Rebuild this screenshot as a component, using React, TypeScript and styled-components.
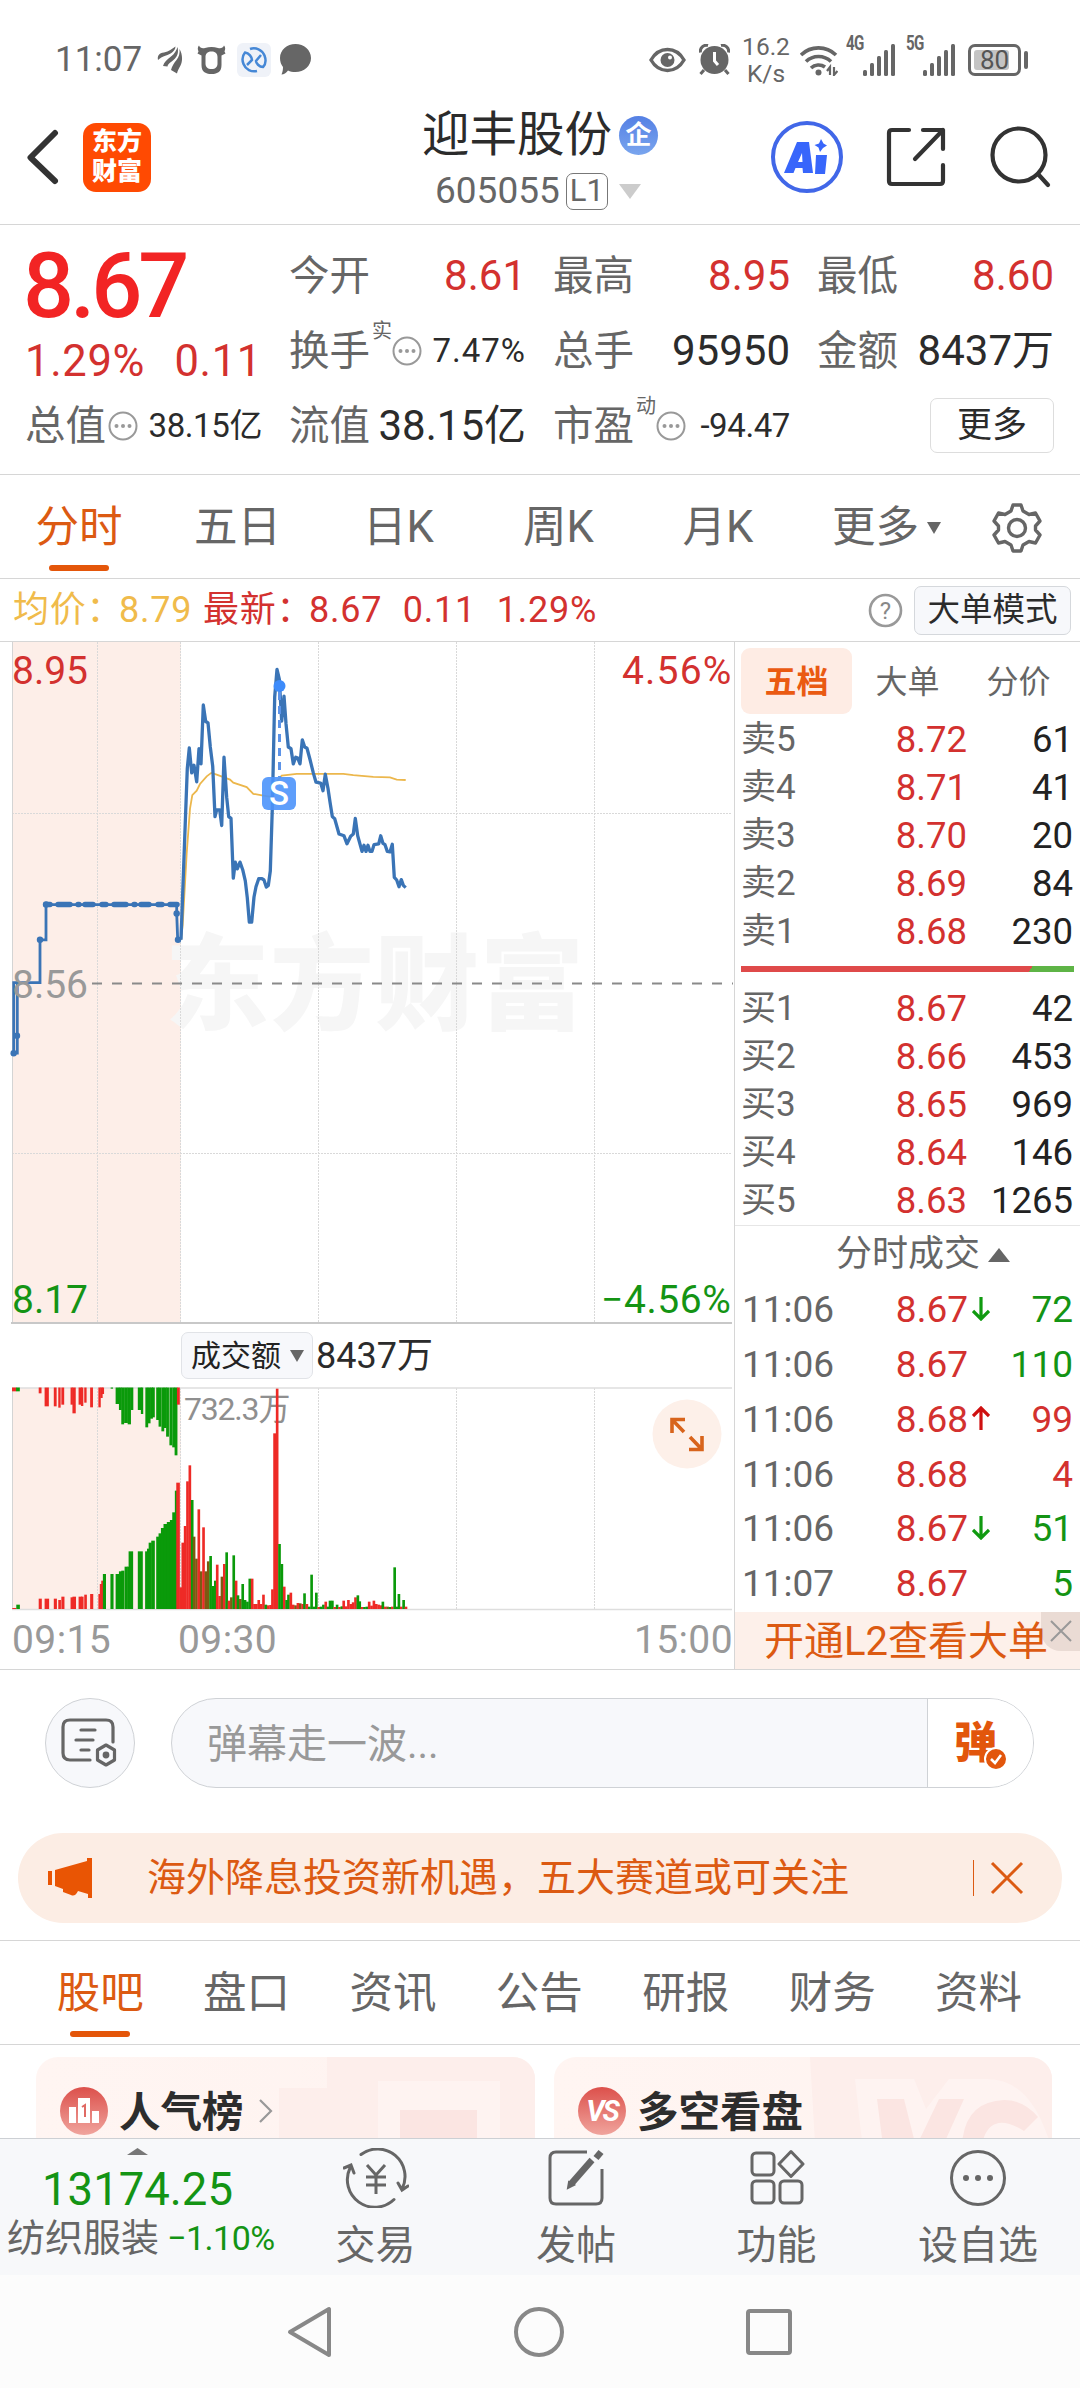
import React from 'react';
import styled, { createGlobalStyle } from 'styled-components';

const RED = '#d3312f';
const GREEN = '#149414';
const ORANGE = '#dc5a12';
const GREY = '#666';
const INK = '#2b2b2b';
const LINE = '#d6d6d6';

const Global = createGlobalStyle`
  * { box-sizing: border-box; }
  body { margin: 0; background: #fff; }
`;

const Screen = styled.div`
  width: 1080px;
  height: 2388px;
  overflow: hidden;
  display: flex;
  flex-direction: column;
  background: #fff;
  color: ${INK};
  font-family: Roboto, 'Noto Sans CJK SC', sans-serif;
  line-height: 1.2;
  white-space: nowrap;
`;

/* ---------- status bar ---------- */
const StatusBar = styled.div`
  height: 96px;
  padding: 23px 52px 0 55px;
  display: flex;
  justify-content: space-between;
  align-items: center;
  color: ${GREY};
`;
const StatusGroup = styled.div`
  display: flex;
  align-items: center;
`;
const Clock = styled.span`
  width: 102px;
  font-size: 35px;
  line-height: 40px;
`;
const Speed = styled.div`
  width: 56px;
  margin-left: 8px;
  text-align: center;
  font-size: 24.5px;
  line-height: 27px;
`;
const Gap = styled.span<{ $w: number }>`
  width: ${(p) => p.$w}px;
  flex: none;
`;
const NetTag = styled.span`
  font: 700 21px/20px 'Roboto', sans-serif;
  letter-spacing: -1px;
  width: 24px;
  align-self: flex-start;
  transform: scaleX(0.72);
  transform-origin: 0 0;
  margin-right: -7px;
`;
const Battery = styled.div`
  width: 53px;
  height: 32px;
  border: 3px solid ${GREY};
  border-radius: 7px;
  padding: 3px;
  display: flex;
`;
const BatteryFill = styled.div`
  width: 35px;
  background: #c4c4c4;
  border-radius: 3px;
  color: #555;
  font-size: 26px;
  line-height: 21px;
  padding-left: 6px;
`;
const BatteryTip = styled.div`
  width: 4px;
  height: 18px;
  margin-left: 3px;
  background: ${GREY};
  border-radius: 2px;
`;

/* ---------- header ---------- */
const Header = styled.header`
  height: 129px;
  border-bottom: 1px solid ${LINE};
  display: grid;
  grid-template-columns: 422px 240px 1fr;
`;
const HeaderLeft = styled.div`
  display: flex;
  align-items: center;
  padding: 0 0 6px 25px;
  gap: 22px;
`;
const Logo = styled.div`
  width: 68px;
  height: 69px;
  border-radius: 13px;
  background: #ff4a02;
  color: #fff;
  font-weight: 900;
  font-size: 25px;
  line-height: 30px;
  text-align: center;
  padding-top: 4px;
`;
const TitleBlock = styled.div`
  display: flex;
  flex-direction: column;
  width: 240px;
`;
const TitleRow = styled.div`
  display: flex;
  align-items: center;
  height: 60px;
  margin-top: 9px;
  font-size: 47.5px;
  gap: 7px;
  line-height: 61px;
`;
const Badge = styled.span`
  width: 39px;
  height: 39px;
  border-radius: 50%;
  background: linear-gradient(#5580e4, #79a5ee);
  color: #fff;
  font-weight: 700;
  font-size: 26px;
  line-height: 39px;
  text-align: center;
`;
const CodeRow = styled.div`
  display: flex;
  align-items: center;
  height: 40px;
  margin-top: 6px;
  padding-left: 13px;
  color: ${GREY};
  font-size: 37px;
`;
const LevelTag = styled.span`
  width: 42px;
  height: 37px;
  margin: 0 11px 0 6px;
  border: 1.5px solid #777;
  border-radius: 7px;
  font-size: 31px;
  line-height: 34px;
  text-align: center;
`;
const HeaderRight = styled.div`
  display: flex;
  align-items: center;
  justify-content: flex-end;
  padding: 0 29px 6px 0;
  gap: 43px;
`;
const AiButton = styled.div`
  width: 72px;
  height: 72px;
  border: 4px solid #4167e8;
  border-radius: 50%;
  display: grid;
  place-items: center;
`;

/* ---------- quote summary ---------- */
const Quote = styled.section`
  height: 250px;
  padding: 13px 25px 0 25px;
  border-bottom: 1px solid ${LINE};
  display: grid;
  grid-template-columns: repeat(4, 237px);
  column-gap: 27px;
`;
const QuoteCol = styled.div`
  display: flex;
  flex-direction: column;
`;
const BigPrice = styled.div`
  height: 98px;
  color: #f22424;
  font-weight: 500;
  font-size: 90px;
  line-height: 98px;
  letter-spacing: -4px;
  margin-left: -2px;
`;
const Change = styled.div`
  height: 52px;
  display: flex;
  justify-content: space-between;
  color: ${RED};
  font-size: 43.5px;
  line-height: 52px;
  letter-spacing: 0.7px;
`;
const Stat = styled.div`
  height: 75px;
  display: flex;
  align-items: center;
`;
const StatLabel = styled.span`
  color: ${GREY};
  font-size: 40.5px;
  line-height: 50px;
`;
const StatSup = styled.sup`
  font-size: 20px;
  line-height: 20px;
  color: ${GREY};
  align-self: flex-start;
  margin: 8px 0 0 2px;
`;
const StatValue = styled.span<{ $red?: boolean; $small?: boolean; $wide?: boolean }>`
  margin-left: auto;
  line-height: 50px;
  color: ${(p) => (p.$red ? RED : INK)};
  font-size: ${(p) => (p.$small ? 33 : 42)}px;
  letter-spacing: ${(p) => (p.$wide ? 1 : p.$small ? -0.4 : 0)}px;
`;
const MoreButton = styled.button`
  margin-left: auto;
  width: 124px;
  height: 55px;
  border: 1px solid #ddd;
  border-radius: 7px;
  background: #fff;
  color: ${INK};
  font: 35px/50px Roboto, 'Noto Sans CJK SC', sans-serif;
  padding: 0;
`;

/* ---------- period tabs ---------- */
const PeriodTabs = styled.nav`
  height: 104px;
  border-bottom: 1px solid ${LINE};
  display: grid;
  grid-template-columns: 158px 159px 163px 157px 162px 175px 86px;
`;
const TabCell = styled.div<{ $on?: boolean }>`
  display: flex;
  align-items: center;
  justify-content: center;
  padding-top: 3px;
  gap: 8px;
  font-size: 43.5px;
  color: ${(p) => (p.$on ? ORANGE : GREY)};
`;
const ActiveTab = styled(TabCell)`
  position: relative;
  &::after {
    content: '';
    position: absolute;
    left: calc(50% - 30px);
    bottom: 7px;
    width: 60px;
    height: 6px;
    border-radius: 3px;
    background: #e4560a;
  }
`;

/* ---------- chart header ---------- */
const Legend = styled.div`
  height: 63px;
  border-bottom: 1px solid ${LINE};
  padding: 0 9px 0 13px;
  display: flex;
  align-items: center;
  font-size: 36px;
  line-height: 45px;
  color: ${RED};
`;
const LegendItem = styled.span<{ $w: number; $avg?: boolean }>`
  width: ${(p) => p.$w}px;
  letter-spacing: 0.8px;
  color: ${(p) => (p.$avg ? '#f0bb4b' : RED)};
`;
const ModeButton = styled.button`
  width: 157px;
  height: 49px;
  margin-left: 11px;
  border: 1px solid #d5d8dc;
  border-radius: 7px;
  background: #f7f8fb;
  color: ${INK};
  padding: 0;
  font: 32.5px/47px Roboto, 'Noto Sans CJK SC', sans-serif;
`;

/* ---------- market area ---------- */
const Market = styled.section`
  height: 1028px;
  display: grid;
  grid-template-columns: 734px 346px;
  border-bottom: 1px solid ${LINE};
`;
const ChartSide = styled.div`
  display: flex;
  flex-direction: column;
`;
const AmountRow = styled.div`
  height: 63px;
  padding-left: 181px;
  display: flex;
  align-items: center;
  font-size: 36px;
  line-height: 44px;
`;
const AmountPick = styled.button`
  width: 132px;
  height: 47px;
  margin-right: 3px;
  padding: 0 0 0 9px;
  display: flex;
  align-items: center;
  gap: 9px;
  border: 1px solid #e1e3e7;
  border-radius: 7px;
  background: #f7f8fb;
  color: #222;
  font: 30px/40px Roboto, 'Noto Sans CJK SC', sans-serif;
`;
const TimeAxis = styled.div`
  display: grid;
  grid-template-columns: 166px 1fr auto;
  padding: 7px 1px 0 12px;
  color: #999;
  font-size: 39px;
  line-height: 44px;
  letter-spacing: 0.4px;
`;
const BookSide = styled.aside`
  border-left: 1px solid ${LINE};
  height: 1027px;
  display: flex;
  flex-direction: column;
`;
const BookTabs = styled.div`
  height: 74px;
  padding: 6px 6px 0;
  display: grid;
  grid-template-columns: 111px 111px 111px;
`;
const BookTab = styled.div<{ $on?: boolean }>`
  height: 66px;
  border-radius: 9px;
  background: ${(p) => (p.$on ? '#feece4' : 'transparent')};
  color: ${(p) => (p.$on ? '#ea5a12' : GREY)};
  font-weight: ${(p) => (p.$on ? 700 : 400)};
  font-size: 32px;
  line-height: 69px;
  text-align: center;
`;
const BookRow = styled.div`
  height: 48px;
  padding: 0 7px 0 6px;
  display: grid;
  grid-template-columns: 120px 106px 1fr;
  align-items: center;
  font-size: 36.5px;
  line-height: 48px;
`;
const RowLabel = styled.span`
  color: ${GREY};
  font-size: 35px;
`;
const RowPrice = styled.span`
  color: ${RED};
  text-align: right;
`;
const RowQty = styled.span<{ $c?: string }>`
  color: ${(p) => p.$c || '#222'};
  text-align: right;
`;
const Ratio = styled.div`
  height: 6px;
  margin: 10px 6px 13px;
  background: linear-gradient(120deg, #df4a4a 86.6%, #5eb446 86.6%);
`;
const TickHead = styled.div`
  height: 58px;
  border-top: 1px solid #e6e6e6;
  padding-left: 101px;
  display: flex;
  align-items: center;
  gap: 8px;
  font-size: 36px;
  color: ${GREY};
`;
const TickRow = styled.div`
  height: 54.8px;
  padding: 0 7px 0 7px;
  display: grid;
  grid-template-columns: 120px 106px 22px 1fr;
  align-items: center;
  font-size: 37px;
`;
const TickTime = styled.span`
  color: ${GREY};
`;
const L2Banner = styled.div`
  position: relative;
  flex: 1;
  min-height: 0;
  background: #fdf0ea;
  color: ${ORANGE};
  font-size: 40px;
  line-height: 60px;
  padding-left: 29px;
`;
const L2Close = styled.div`
  position: absolute;
  right: 0;
  top: 0;
  width: 39px;
  height: 39px;
  border-bottom-left-radius: 20px;
  background: rgba(120, 90, 80, 0.14);
  display: grid;
  place-items: center;
`;

/* ---------- comment bar ---------- */
const CommentBar = styled.div`
  height: 163px;
  padding: 28px 46px 0 45px;
  display: flex;
  gap: 36px;
`;
const RoundTool = styled.div`
  width: 90px;
  height: 90px;
  border: 1px solid #cfd2d6;
  border-radius: 50%;
  background: #f7f8fb;
  display: grid;
  place-items: center;
`;
const CommentInput = styled.div`
  flex: 1;
  height: 90px;
  border: 1px solid #cfd2d6;
  border-radius: 45px;
  overflow: hidden;
  display: flex;
  background: #f7f8fb;
  color: #999;
  font-size: 40px;
  line-height: 91px;
  padding-left: 35px;
`;
const DanmuToggle = styled.div`
  width: 106px;
  margin-left: auto;
  border-left: 1px solid #cfd2d6;
  background: #fff;
  display: flex;
  align-items: center;
  color: #e2560c;
  padding-left: 26px;
  font-weight: 900;
  font-size: 43px;
`;
const CheckSvg = styled.svg`
  margin: 32px 0 0 -13px;
  flex: none;
`;

/* ---------- promotion ---------- */
const Promo = styled.div`
  height: 90px;
  margin: 0 18px 17px;
  padding: 0 38px 0 29px;
  border-radius: 45px;
  background: #fcede4;
  display: flex;
  align-items: center;
  color: ${ORANGE};
  font-size: 39px;
`;
const PromoText = styled.span`
  margin-left: 52px;
  flex: 1;
`;
const PromoRule = styled.span`
  width: 1.5px;
  height: 36px;
  margin-right: 16px;
  background: ${ORANGE};
`;

/* ---------- content tabs ---------- */
const ContentTabs = styled.nav`
  height: 105px;
  border-top: 1px solid ${LINE};
  border-bottom: 1px solid ${LINE};
  padding: 0 27px;
  display: grid;
  grid-template-columns: repeat(7, 146.4px);
`;
const Cards = styled.div`
  height: 93px;
  padding: 12px 28px 0 36px;
  display: grid;
  grid-template-columns: 499px 498px;
  column-gap: 19px;
  overflow: hidden;
`;
const Card = styled.div`
  position: relative;
  height: 120px;
  border-radius: 22px;
  overflow: hidden;
  background: linear-gradient(90deg, #fff5f2, #fef3f0);
`;
const CardArt = styled.svg`
  position: absolute;
  inset: 0;
`;
const CardTitle = styled.div`
  position: relative;
  display: flex;
  align-items: center;
  height: 108px;
  padding-left: 24px;
  font-size: 41.5px;
  line-height: 52px;
  font-weight: 700;
  color: #2d2d2d;
`;
const CardName = styled.span`
  padding-top: 3px;
`;
const CardIcon = styled.span`
  width: 48px;
  height: 48px;
  margin-right: 11px;
  border-radius: 50%;
  background: linear-gradient(#dc504b, #f0a49d);
  color: #fff;
  display: grid;
  place-items: center;
  font: italic 700 29px/48px Roboto, sans-serif;
  letter-spacing: -2px;
`;

/* ---------- bottom bar ---------- */
const BottomBar = styled.footer`
  height: 137px;
  border-top: 1px solid #cdd0d4;
  background: #f7f8fa;
  display: grid;
  grid-template-columns: 275px 201px 200px 201px 202px;
`;
const IndexBox = styled.div`
  display: flex;
  flex-direction: column;
  align-items: center;
  padding-top: 9px;
`;
const IndexValue = styled.div`
  color: ${GREEN};
  font-size: 45.5px;
  line-height: 54px;
  margin-top: 8px;
`;
const IndexRow = styled.div`
  align-self: flex-start;
  display: flex;
  align-items: center;
  gap: 8px;
  padding-left: 7px;
  line-height: 43px;
  color: ${GREY};
  font-size: 38px;
`;
const IndexPct = styled.span`
  color: ${GREEN};
  font-size: 34px;
  letter-spacing: -0.5px;
`;
const Action = styled.div`
  display: flex;
  flex-direction: column;
  align-items: center;
  padding-top: 9px;
  color: ${GREY};
  font-size: 40px;
  line-height: 54px;
  gap: 11px;
`;
const NavBar = styled.div`
  flex: 1;
  background: #fcfcfc;
  display: flex;
  justify-content: center;
  align-items: center;
  gap: 180px;
`;

/* ---------- small drawings ---------- */
const Dots = () => (
  <svg width="30" height="30" viewBox="0 0 30 30" style={{ flex: 'none' }}>
    <circle cx="15" cy="15" r="13.5" fill="none" stroke="#999" strokeWidth="2" />
    {[8.5, 15, 21.5].map((x) => <circle key={x} cx={x} cy="15" r="2" fill="#999" />)}
  </svg>
);
const Tri = ({ w, h, c, up }: { w: number; h: number; c: string; up?: boolean }) => (
  <svg width={w} height={h} viewBox="0 0 10 10" preserveAspectRatio="none">
    <path d={up ? 'M0 10L5 0L10 10Z' : 'M0 0L5 10L10 0Z'} fill={c} />
  </svg>
);
const Signal = () => (
  <svg width="32" height="32" viewBox="0 0 32 32" fill={GREY}>
    <rect x="0" y="26" width="4" height="6" rx="1.5" />
    <rect x="7" y="19" width="4" height="13" rx="1.5" />
    <rect x="14" y="12" width="4" height="20" rx="1.5" />
    <rect x="21" y="6" width="4" height="26" rx="1.5" />
    <rect x="28" y="0" width="4" height="32" rx="1.5" />
  </svg>
);
const ArrowSvg = styled.svg`
  display: block;
  margin: -3px 0 0 4px;
`;
const TickArrow = ({ up }: { up: boolean }) => (
  <ArrowSvg width="18" height="24" viewBox="0 0 18 24" fill="none" stroke={up ? '#cf1010' : '#109a10'} strokeWidth="3.2">
    <path d={up ? 'M9 24V2M1 10L9 2L17 10' : 'M9 0V22M1 14L9 22L17 14'} />
  </ArrowSvg>
);

/* ---------- price chart ---------- */
const sx = (x: number) => x / 3;
const sy = (y: number) => y / 2.24 - 12;
const toPoints = (s: string) =>
  s.split(' ').map((p) => {
    const [x, y] = p.split(',').map(Number);
    return `${sx(x).toFixed(1)},${sy(y).toFixed(1)}`;
  }).join(' ');

const AUCTION = '41,948 41,790 52,790 52,948 41,948 41,790 120,790 120,694 138,694 138,615 530,615 530,635 533,694 543,694';
const PRICE =
  '543,694 556,430 562,310 568,264 575,320 582,303 590,340 597,266 603,300 610,168 617,205 624,208 631,262 638,305 645,418 650,403 659,403 665,438 672,285 680,375 686,418 693,422 700,556 706,520 712,535 720,520 728,537 736,562 742,600 748,654 755,654 762,598 768,575 776,557 786,557 792,560 799,576 805,572 811,540 817,400 824,150 831,88 838,110 845,204 852,148 858,210 865,262 873,266 880,300 887,285 893,287 900,300 907,246 914,262 921,265 930,290 940,320 948,341 962,343 969,360 976,323 984,355 990,385 997,418 1004,423 1017,457 1032,461 1041,479 1052,462 1060,457 1066,422 1073,461 1086,496 1092,482 1098,496 1104,482 1110,496 1116,496 1122,481 1136,479 1142,461 1149,478 1155,481 1162,496 1170,497 1177,480 1183,554 1190,560 1197,575 1204,559 1210,572 1217,577';
const AVERAGE =
  '543,694 548,660 560,500 570,400 577,370 590,360 600,345 620,328 634,320 650,324 690,335 700,342 740,352 760,367 790,371 815,374 830,340 845,326 890,322 1030,322 1060,325 1120,329 1170,330 1190,335 1217,336';
const COLS = [97, 180, 318, 456, 594];

const PriceChart = () => (
  <svg width="734" height="682" viewBox="0 0 734 682" fontFamily="Roboto, 'Noto Sans CJK SC', sans-serif" style={{ display: 'block' }}>
    <rect x="12" y="0" width="169" height="681" fill="#fdeee8" />
    <text x="165" y="380" fontSize="104" fontWeight="800" fill="#f6f6f6" textLength="419">东方财富</text>
    <g stroke="#d9d9d9" strokeWidth="1" strokeDasharray="2 1">
      {COLS.map((x) => <path key={x} d={`M${x + 0.5} 0V681`} />)}
      <path d="M12 171.5H732M12 511.5H732" />
    </g>
    <path d="M12.5 0V681" stroke="#d4d4d4" />
    <path d="M11 681H732" stroke="#c8c8c8" strokeWidth="2" />
    <path d="M92 341.5H733" stroke="#8a8a8a" strokeWidth="1.8" strokeDasharray="10 10" />
    <polyline points={toPoints(AVERAGE)} fill="none" stroke="#ecb74c" strokeWidth="1.8" />
    <polyline points={toPoints(AUCTION)} fill="none" stroke="#3a74b6" strokeWidth="2.8" />
    <path d="M46 262.5H177" stroke="#3a74b6" strokeWidth="5.5" strokeLinecap="round" strokeDasharray="4 8 12 8 1 6 8 9" />
    {[[41, 948], [51, 909], [120, 694], [138, 615], [530, 635], [534, 694]].map(([x, y]) => (
      <circle key={`${x}-${y}`} cx={sx(x)} cy={sy(y)} r="3.2" fill="#3a74b6" />
    ))}
    <polyline points={toPoints(PRICE)} fill="none" stroke="#3a74b6" strokeWidth="3.3" strokeLinejoin="round" />
    <circle cx="279.5" cy="44" r="6" fill="#3d8bfa" />
    <path d="M279.5 50V135" stroke="#5c93e8" strokeWidth="3" strokeDasharray="8 6" />
    <rect x="262" y="135" width="34" height="33" rx="6" fill="#4c93fb" fillOpacity="0.9" />
    <text x="279" y="163" fontSize="33" fontWeight="500" fill="#fff" textAnchor="middle">S</text>
    <g fontSize="39">
      <text x="12" y="42" fill={RED}>8.95</text>
      <text x="622" y="42" fill={RED} letterSpacing="1.2">4.56%</text>
      <text x="12" y="356" fill="#999">8.56</text>
      <text x="12" y="671" fill={GREEN}>8.17</text>
      <text x="601" y="671" fill={GREEN} letterSpacing="0.6">−4.56%</text>
    </g>
  </svg>
);

/* Each bar: position, reach, colour key and an optional width. */
type Bar = [number, number, string, number?];
const HANGING: Bar[] = [
  [30, 212, 'r', 9], [38, 212, 'g', 8], [85, 218, 'r', 6], [99, 257, 'r', 9], [117, 257, 'r', 6], [126, 261, 'r', 5],
  [133, 252, 'r', 6], [152, 252, 'r', 5], [157, 278, 'r', 7], [170, 252, 'r', 7], [174, 256, 'r', 5], [181, 246, 'r', 5],
  [194, 260, 'r', 6], [211, 260, 'r', 5], [215, 232, 'r'], [218, 220, 'r'], [237, 204, 'g'], [249, 250, 'g', 8],
  [255, 268, 'g', 6], [260, 311, 'g', 6], [267, 307, 'g', 8], [274, 311, 'g', 7], [280, 268, 'g', 5], [296, 268, 'g', 8],
  [301, 280, 'g', 5], [311, 320, 'g', 6], [316, 308, 'g', 6], [321, 294, 'g', 6], [325, 290, 'g', 6], [334, 298, 'g', 6],
  [339, 318, 'g', 6], [345, 332, 'g', 6], [350, 322, 'g', 6], [355, 348, 'g', 6], [362, 374, 'g', 6], [368, 380, 'g', 6],
  [373, 404, 'g', 6], [378, 252, 'r', 6],
];
const VOLUME: Bar[] = [
  [30, 862, 'r', 8], [38, 852, 'g', 7], [85, 834, 'r', 6], [99, 834, 'r', 9], [117, 834, 'r', 6], [126, 838, 'r'],
  [133, 828, 'r', 6], [152, 830, 'r'], [157, 828, 'r', 7], [170, 828, 'r', 7], [174, 828, 'r'], [181, 822, 'r'], [194, 820, 'r', 6],
  [211, 820, 'r'], [214, 790, 'r'], [217, 780, 'r'], [221, 760, 'g', 6], [237, 760, 'g', 6], [249, 760, 'g', 8], [255, 752, 'g', 6],
  [260, 750, 'g', 6], [267, 738, 'g', 6], [272, 738, 'g'], [277, 692, 'g', 9], [297, 692, 'g', 10], [310, 692, 'g'], [314, 684, 'g'],
  [318, 666, 'g', 6], [324, 660, 'g', 7], [334, 648, 'g', 6], [339, 638, 'g', 6], [344, 622, 'g', 6], [350, 610, 'g', 7],
  [357, 604, 'g', 7], [363, 598, 'g', 6], [368, 575, 'g', 6], [373, 510, 'g'], [377, 486, 'r', 7], [383, 800, 'r', 6],
  [387, 666, 'r'], [392, 616, 'r'], [397, 482, 'r'], [402, 434, 'r'], [407, 538, 'g'], [411, 648, 'b'], [416, 714, 'b'],
  [421, 566, 'r'], [426, 752, 'b'], [431, 620, 'r'], [436, 752, 'b'], [441, 722, 'b'], [446, 706, 'g'], [451, 796, 'g'],
  [456, 780, 'g'], [460, 732, 'r'], [465, 826, 'r'], [470, 768, 'b'], [475, 730, 'r'], [480, 695, 'g'], [485, 840, 'r'],
  [490, 830, 'b'], [495, 704, 'g'], [500, 780, 'r'], [504, 824, 'g'], [509, 835, 'b'], [514, 790, 'g'], [519, 838, 'g'],
  [524, 843, 'g'], [529, 774, 'g'], [534, 774, 'r'], [539, 850, 'r'], [543, 850, 'r'], [548, 838, 'r'], [553, 850, 'r'],
  [558, 822, 'r'], [563, 852, 'g'], [568, 854, 'r'], [573, 853, 'r'], [577, 806, 'r'], [582, 338, 'r', 6], [587, 204, 'r'],
  [592, 670, 'g'], [597, 730, 'g'], [602, 798, 'r'], [607, 838, 'g'], [611, 822, 'g'], [616, 816, 'r'], [621, 852, 'r'],
  [626, 854, 'b'], [631, 847, 'r'], [636, 848, 'b'], [641, 850, 'r'], [645, 818, 'g'], [650, 850, 'r'], [655, 858, 'g'],
  [660, 762, 'g'], [665, 858, 'g'], [670, 816, 'g'], [675, 859, 'r'], [680, 858, 'g'], [685, 852, 'g'], [690, 843, 'r'],
  [695, 858, 'g'], [699, 840, 'g'], [704, 840, 'g'], [709, 859, 'r'], [714, 852, 'g'], [719, 859, 'r'], [724, 857, 'g'],
  [728, 840, 'r'], [733, 857, 'r'], [738, 838, 'r'], [743, 850, 'r'], [748, 845, 'r'], [753, 830, 'r'], [758, 824, 'g'],
  [762, 842, 'g'], [767, 859, 'r'], [772, 859, 'g'], [777, 858, 'g'], [782, 843, 'r'], [787, 855, 'r'], [792, 840, 'r'],
  [797, 850, 'r'], [802, 852, 'r'], [807, 854, 'r'], [811, 843, 'g'], [816, 858, 'r'], [821, 858, 'b'], [826, 859, 'g'],
  [831, 858, 'r'], [836, 740, 'g'], [841, 858, 'g'], [845, 820, 'g'], [850, 858, 'r'], [855, 838, 'g'], [860, 858, 'r'],
];
const TONE: Record<string, string> = { r: '#ee2a26', g: '#0a9a0a', b: '#7d5a12' };
const bx = (x: number) => x / 2.119;
const by = (y: number) => (y - 202) / 3;

const VolumeChart = () => (
  <svg width="734" height="224" viewBox="0 -1 734 224" fontFamily="Roboto, 'Noto Sans CJK SC', sans-serif" style={{ display: 'block' }}>
    <rect x="12" y="0" width="169" height="221" fill="#fdeee8" />
    <g stroke="#d9d9d9" strokeDasharray="2 1">
      {COLS.map((x) => <path key={x} d={`M${x + 0.5} 0V221`} />)}
    </g>
    <path d="M12.5 0V221" stroke="#d4d4d4" />
    <path d="M12 0H732M12 221.5H732" stroke="#dedede" strokeWidth="1.5" />
    <text x="184" y="32" fontSize="32" fill="#8f8f8f" letterSpacing="-1.2">732.3万</text>
    {HANGING.map(([x, y, c, w = 5], i) => (
      <rect key={i} x={bx(x - w / 2)} y={-0.5} width={bx(w)} height={by(y) + 0.5} fill={TONE[c]} />
    ))}
    {VOLUME.map(([x, y, c, w = 5], i) => (
      <rect key={i} x={bx(x - w / 2)} y={by(y)} width={bx(w + 0.6)} height={221 - by(y)} fill={TONE[c]} />
    ))}
    <circle cx="687" cy="46" r="34.5" fill="#fdf0e9" />
    <g fill="none" stroke="#d8641c" strokeWidth="3.6">
      <path d="M685 31.500H672V45M672 31.500L684 44M689 61.500H702V48M702 61.500L690 49" />
    </g>
  </svg>
);

const SELLS = [['卖5', '8.72', '61'], ['卖4', '8.71', '41'], ['卖3', '8.70', '20'], ['卖2', '8.69', '84'], ['卖1', '8.68', '230']];
const BUYS = [['买1', '8.67', '42'], ['买2', '8.66', '453'], ['买3', '8.65', '969'], ['买4', '8.64', '146'], ['买5', '8.63', '1265']];
const TICKS: [string, string, string, string, string][] = [
  ['11:06', '8.67', 'd', '72', GREEN],
  ['11:06', '8.67', '', '110', GREEN],
  ['11:06', '8.68', 'u', '99', RED],
  ['11:06', '8.68', '', '4', RED],
  ['11:06', '8.67', 'd', '51', GREEN],
  ['11:07', '8.67', '', '5', GREEN],
];

const Rows = ({ data }: { data: string[][] }) => (
  <>
    {data.map(([n, p, q]) => (
      <BookRow key={n}>
        <RowLabel>{n}</RowLabel>
        <RowPrice>{p}</RowPrice>
        <RowQty>{q}</RowQty>
      </BookRow>
    ))}
  </>
);

const Status = () => (
  <StatusBar>
    <StatusGroup>
      <Clock>11:07</Clock>
      <svg width="27" height="30" viewBox="0 0 27 30" fill={GREY}>
        <path d="M1 15C0 11 2 8 7 7.500C12 6.500 15 4 18.500 1.500C18 7 13 9 9 10.500C5 12 3 13 1 15Z" />
        <path d="M6 21C7 17 10 14.500 14 11.500C17.500 9 19.500 5 20.500 2C22 8 20 12 17 14.500C13 18 11 18.500 10.500 21.500Z" />
        <path d="M14 25C15 21 17 18 19.500 15C22 12 23 8 22.500 4C26 10 25.500 17 23.500 20.500C21.500 24 20.500 26 20 28.500C18 27.500 16 26 14 25Z" />
      </svg>
      <Gap $w={13} />
      <svg width="29" height="30" viewBox="0 0 29 30" fill={GREY}>
        <path fillRule="evenodd" d="M2 0.500C3 3 5 3.500 8 3Q14.500 1 21 3C24 3.500 26 3 27 0.500C28.500 2 28.500 4 27.500 6.500L28.500 8.500L24.500 10.500V20C24.500 26.500 21 29 14.500 29S4.500 26.500 4.500 20V10.500L0.500 8.500L1.500 6.500C0.500 4 0.500 2 2 0.500ZM14.500 6.500C10 6.500 8.500 9 8.500 12V18.500C8.500 22 10.500 24 14.500 24S20.500 22 20.500 18.500V12C20.500 9 19 6.500 14.500 6.500Z" />
      </svg>
      <Gap $w={11} />
      <svg width="34" height="34" viewBox="0 0 34 34" fill="none" stroke="#4688d6" strokeWidth="2.500">
        <rect width="34" height="34" rx="6" fill="#eff2f8" stroke="none" />
        <path d="M13 6A11.500 11.500 0 0 1 27.500 12.500C29.500 18 28 22 26 24C22 24 19 20 19 18L24 12M20 28A11.500 11.500 0 0 1 6.500 21C4.500 16 6 12 8 9.500C12 10 15 14 15 17L10 22" />
      </svg>
      <Gap $w={9} />
      <svg width="31" height="31" viewBox="0 0 31 31" fill={GREY}>
        <path d="M15.500 0C24 0 31 6 31 14S24 28 15.500 28C12.500 28 10 27.500 8 26.500C6 29 4 30.500 1.500 30.500C2.500 28 3 26 3 23C1 20.500 0 17.500 0 14C0 6 7 0 15.500 0Z" />
      </svg>
    </StatusGroup>
    <StatusGroup>
      <svg width="37" height="26" viewBox="0 0 37 26">
        <path d="M2 13C10-1 27-1 35 13C27 27 10 27 2 13Z" fill="none" stroke={GREY} strokeWidth="3.400" />
        <circle cx="18.500" cy="13" r="7" fill={GREY} /><circle cx="21" cy="10.500" r="2" fill="#fff" />
      </svg>
      <Gap $w={13} />
      <svg width="31" height="31" viewBox="0 0 31 31" fill={GREY}>
        <circle cx="15.500" cy="16" r="14" />
        <path d="M1.500 8.500A6 6 0 0 1 9 1.500M29.500 8.500A6 6 0 0 0 22 1.500M5 26L1.500 30M26 26L29.500 30" stroke={GREY} strokeWidth="3" fill="none" />
        <path d="M15.500 8V17L19 21" stroke="#fff" strokeWidth="3" fill="none" />
      </svg>
      <Speed>16.2<br />K/s</Speed>
      <Gap $w={6} />
      <svg width="38" height="32" viewBox="0 0 38 32" fill="none" stroke={GREY} strokeWidth="3.600">
        <path d="M1 11A25 25 0 0 1 36 11M6 17.500A18 18 0 0 1 31 17.500M11 24A11 11 0 0 1 25 23" />
        <circle cx="18.500" cy="28.500" r="3" fill={GREY} stroke="none" />
        <path d="M30 31V23L27 27M34 23V31L37.500 27" strokeWidth="2.200" />
      </svg>
      <Gap $w={8} />
      <NetTag>4G</NetTag>
      <Signal />
      <Gap $w={11} />
      <NetTag>5G</NetTag>
      <Signal />
      <Gap $w={13} />
      <Battery><BatteryFill>80</BatteryFill></Battery>
      <BatteryTip />
    </StatusGroup>
  </StatusBar>
);

const Top = () => (
  <Header>
    <HeaderLeft>
      <svg width="36" height="56" viewBox="0 0 36 56" fill="none" stroke="#333" strokeWidth="6" strokeLinecap="round">
        <path d="M30 4L5.500 28.500L30 52" strokeLinejoin="round" />
      </svg>
      <Logo>东方<br />财富</Logo>
    </HeaderLeft>
    <TitleBlock>
      <TitleRow>迎丰股份<Badge>企</Badge></TitleRow>
      <CodeRow>605055<LevelTag>L1</LevelTag><Tri w={22} h={15} c="#ccc" /></CodeRow>
    </TitleBlock>
    <HeaderRight>
      <AiButton>
        <svg width="50" height="44" viewBox="0 0 50 44" fill="#3866fb">
          <path fillRule="evenodd" d="M15 7H27L31 38H21L20.500 33H13.500L11.500 38H2ZM20 18L16 27H20.500Z" />
          <path d="M34 20H45L43 39H33ZM39 4L41.500 8.500L45 10.500L41 13L38 17L36.500 12.500L32.500 10L37 8.500Z" />
        </svg>
      </AiButton>
      <svg width="60" height="60" viewBox="0 0 60 60" fill="none" stroke="#333" strokeWidth="4.200" strokeLinecap="round" strokeLinejoin="round">
        <path d="M23 3H6Q3 3 3 6V54Q3 57 6 57H54Q57 57 57 54V38M37 3H57V22M57 3L29 32" />
      </svg>
      <svg width="62" height="62" viewBox="0 0 62 62" fill="none" stroke="#333" strokeWidth="4.200" strokeLinecap="round">
        <circle cx="30" cy="29" r="26.500" /><path d="M49 48L59 59" />
      </svg>
    </HeaderRight>
  </Header>
);

export default function App() {
  return (
    <Screen>
      <Global />
      <Status />
      <Top />
      <Quote>
        <QuoteCol>
          <BigPrice>8.67</BigPrice>
          <Change><span>1.29%</span><span>0.11</span></Change>
          <Stat><StatLabel>总值</StatLabel><Gap $w={2} /><Dots /><StatValue $small>38.15亿</StatValue></Stat>
        </QuoteCol>
        <QuoteCol>
          <Stat><StatLabel>今开</StatLabel><StatValue $red>8.61</StatValue></Stat>
          <Stat><StatLabel>换手</StatLabel><StatSup>实</StatSup><Dots /><StatValue $small $wide>7.47%</StatValue></Stat>
          <Stat><StatLabel>流值</StatLabel><StatValue>38.15亿</StatValue></Stat>
        </QuoteCol>
        <QuoteCol>
          <Stat><StatLabel>最高</StatLabel><StatValue $red>8.95</StatValue></Stat>
          <Stat><StatLabel>总手</StatLabel><StatValue>95950</StatValue></Stat>
          <Stat><StatLabel>市盈</StatLabel><StatSup>动</StatSup><Dots /><StatValue $small>-94.47</StatValue></Stat>
        </QuoteCol>
        <QuoteCol>
          <Stat><StatLabel>最低</StatLabel><StatValue $red>8.60</StatValue></Stat>
          <Stat><StatLabel>金额</StatLabel><StatValue>8437万</StatValue></Stat>
          <Stat><MoreButton>更多</MoreButton></Stat>
        </QuoteCol>
      </Quote>
      <PeriodTabs>
        <ActiveTab $on>分时</ActiveTab>
        <TabCell>五日</TabCell>
        <TabCell>日K</TabCell>
        <TabCell>周K</TabCell>
        <TabCell>月K</TabCell>
        <TabCell>更多<Tri w={14} h={12} c={GREY} /></TabCell>
        <TabCell>
          <svg width="52" height="52" viewBox="0 0 52 52" fill="none" stroke={GREY} strokeWidth="3.400" strokeLinejoin="round">
            <path d="M22 3H30L32 9L38 12.500L44.500 11L49 19L44.500 24V28L49 33L44.500 41L38 39.500L32 43L30 49H22L20 43L14 39.500L7.500 41L3 33L7.500 28V24L3 19L7.500 11L14 12.500L20 9Z" />
            <circle cx="26" cy="26" r="8.500" />
          </svg>
        </TabCell>
      </PeriodTabs>
      <Legend>
        <LegendItem $w={106} $avg>均价：</LegendItem>
        <LegendItem $w={84} $avg>8.79</LegendItem>
        <LegendItem $w={106}>最新：</LegendItem>
        <LegendItem $w={94}>8.67</LegendItem>
        <LegendItem $w={94}>0.11</LegendItem>
        <LegendItem $w={372}>1.29%</LegendItem>
        <svg width="35" height="35" viewBox="0 0 35 35" style={{ flex: 'none' }}>
          <circle cx="17.500" cy="17.500" r="15.500" fill="none" stroke="#999" strokeWidth="2.600" />
          <text x="17.500" y="26" fontSize="24" fill="#888" textAnchor="middle">?</text>
        </svg>
        <ModeButton>大单模式</ModeButton>
      </Legend>
      <Market>
        <ChartSide>
          <PriceChart />
          <AmountRow>
            <AmountPick>成交额<Tri w={14} h={12} c={GREY} /></AmountPick>
            8437万
          </AmountRow>
          <VolumeChart />
          <TimeAxis><span>09:15</span><span>09:30</span><span>15:00</span></TimeAxis>
        </ChartSide>
        <BookSide>
          <BookTabs><BookTab $on>五档</BookTab><BookTab>大单</BookTab><BookTab>分价</BookTab></BookTabs>
          <Rows data={SELLS} />
          <Ratio />
          <Rows data={BUYS} />
          <TickHead>分时成交<Tri w={22} h={14} c={GREY} up /></TickHead>
          {TICKS.map(([t, p, d, q, c], i) => (
            <TickRow key={i}>
              <TickTime>{t}</TickTime>
              <RowPrice>{p}</RowPrice>
              <span>{d && <TickArrow up={d === 'u'} />}</span>
              <RowQty $c={c}>{q}</RowQty>
            </TickRow>
          ))}
          <L2Banner>
            开通L2查看大单
            <L2Close>
              <svg width="24" height="24" viewBox="0 0 24 24" stroke="#999" strokeWidth="2"><path d="M2 2L22 22M22 2L2 22" /></svg>
            </L2Close>
          </L2Banner>
        </BookSide>
      </Market>
      <CommentBar>
        <RoundTool>
          <svg width="58" height="54" viewBox="0 0 58 54" fill="none" stroke={GREY} strokeWidth="3.200" strokeLinecap="round">
            <path d="M52 26V11Q52 4 45 4H9Q2 4 2 11V37Q2 44 9 44H29M20 14H34M15 24H32M20 34H28" />
            <path d="M45 29L53.500 34V44L45 49L36.500 44V34Z" strokeLinejoin="round" />
            <circle cx="45" cy="39" r="1.800" fill={GREY} />
          </svg>
        </RoundTool>
        <CommentInput>
          弹幕走一波...
          <DanmuToggle>
            弹
            <CheckSvg width="24" height="24" viewBox="0 0 24 24">
              <circle cx="12" cy="12" r="11" fill="#e2560c" stroke="#fff" strokeWidth="2" />
              <path d="M7 12L11 16L17 8" fill="none" stroke="#fff" strokeWidth="2.600" />
            </CheckSvg>
          </DanmuToggle>
        </CommentInput>
      </CommentBar>
      <Promo>
        <svg width="48" height="40" viewBox="0 0 48 40" fill="#e95504">
          <path d="M1 13H5V27H1ZM8 12L40 3V0H45V40H41V36L31 33Q28 39 24 37L16 34V31L8 28Z" />
        </svg>
        <PromoText>海外降息投资新机遇，五大赛道或可关注</PromoText>
        <PromoRule />
        <svg width="34" height="34" viewBox="0 0 34 34" stroke={ORANGE} strokeWidth="3"><path d="M2 2L32 32M32 2L2 32" /></svg>
      </Promo>
      <ContentTabs>
        <ActiveTab $on>股吧</ActiveTab>
        {['盘口', '资讯', '公告', '研报', '财务', '资料'].map((t) => (
          <TabCell key={t}>{t}</TabCell>
        ))}
      </ContentTabs>
      <Cards>
        <Card>
          <CardArt width="499" height="120" viewBox="0 0 499 120">
            <path d="M291 0H499V120H243V31H291Z" fill="#fdeeeb" />
            <path d="M342 24H464V120H342Z" fill="#fef3f1" />
            <path d="M364 53H441V120H364Z" fill="#fbe5e2" />
          </CardArt>
          <CardTitle>
            <CardIcon>
              <svg width="32" height="26" viewBox="0 0 32 26" fill="#fff">
                <path d="M1 9H8V25H1ZM24 13H31V25H24ZM10 0H22V25H10Z" />
                <path d="M14 9L17 7V19" stroke="#e06a64" strokeWidth="2" fill="none" />
              </svg>
            </CardIcon>
            <CardName>人气榜</CardName>
            <Gap $w={14} />
            <svg width="16" height="26" viewBox="0 0 16 26" fill="none" stroke="#999" strokeWidth="2.200"><path d="M2 2L13 13L2 24" /></svg>
          </CardTitle>
        </Card>
        <Card>
          <CardArt width="498" height="120" viewBox="0 0 498 120">
            <path d="M256 0H498V120H263Z" fill="#fdeeeb" />
            <path d="M301 22H360L372 52L395 22H430Q470 20 490 70L498 90V120H312Z" fill="#fef3f1" />
            <path d="M323 42H350L362 90L385 42H410L375 120H333ZM484 60L470 74Q440 55 430 80Q426 100 440 120H410Q398 45 450 43Q470 43 484 60Z" fill="#fbe5e2" />
          </CardArt>
          <CardTitle><CardIcon>VS</CardIcon><CardName>多空看盘</CardName></CardTitle>
        </Card>
      </Cards>
      <BottomBar>
        <IndexBox>
          <Tri w={21} h={7} c="#777" up />
          <IndexValue>13174.25</IndexValue>
          <IndexRow>纺织服装<IndexPct>−1.10%</IndexPct></IndexRow>
        </IndexBox>
        <Action>
          <svg width="66" height="60" viewBox="0 0 66 60" fill="none" stroke={GREY} strokeWidth="3">
            <path d="M18 6.500A27.500 27.500 0 0 1 59 41M51 51.500A27.500 27.500 0 0 1 7 20M1 20L8 17L11 25M65 38L59 42L55 35" strokeLinecap="round" />
            <path d="M24 17L33 27L42 17M33 27V46M23 29H43M23 37H43" />
          </svg>
          交易
        </Action>
        <Action>
          <svg width="58" height="60" viewBox="0 0 58 60" fill="none" stroke={GREY} strokeWidth="3">
            <path d="M40 4H9Q3 4 3 10V50Q3 56 9 56H49Q55 56 55 50V21" />
            <path d="M24 36L45 12" strokeWidth="6.500" /><path d="M21 40L22 34L27 37Z" fill={GREY} strokeWidth="2" />
            <path d="M49 10L54 4" strokeWidth="6.500" />
          </svg>
          发帖
        </Action>
        <Action>
          <svg width="56" height="60" viewBox="0 0 56 60" fill="none" stroke={GREY} strokeWidth="3" strokeLinejoin="round">
            <rect x="3" y="5" width="22" height="22" rx="4" /><rect x="3" y="33" width="22" height="22" rx="4" />
            <rect x="31" y="33" width="22" height="22" rx="4" /><path d="M42 3.500L54 16L42 28.500L30 16Z" />
          </svg>
          功能
        </Action>
        <Action>
          <svg width="60" height="60" viewBox="0 0 60 60">
            <circle cx="30" cy="30" r="26.500" fill="none" stroke={GREY} strokeWidth="3" />
            {[18, 30, 42].map((x) => <circle key={x} cx={x} cy="30" r="3" fill={GREY} />)}
          </svg>
          设自选
        </Action>
      </BottomBar>
      <NavBar>
        <svg width="46" height="52" viewBox="0 0 46 52" fill="none" stroke="#888" strokeWidth="4" strokeLinejoin="round"><path d="M42 3V49L3 26Z" /></svg>
        <svg width="52" height="52" viewBox="0 0 52 52" fill="none" stroke="#888" strokeWidth="4"><circle cx="26" cy="26" r="23" /></svg>
        <svg width="48" height="48" viewBox="0 0 48 48" fill="none" stroke="#888" strokeWidth="4"><rect x="3" y="3" width="42" height="42" rx="2" /></svg>
      </NavBar>
    </Screen>
  );
}
